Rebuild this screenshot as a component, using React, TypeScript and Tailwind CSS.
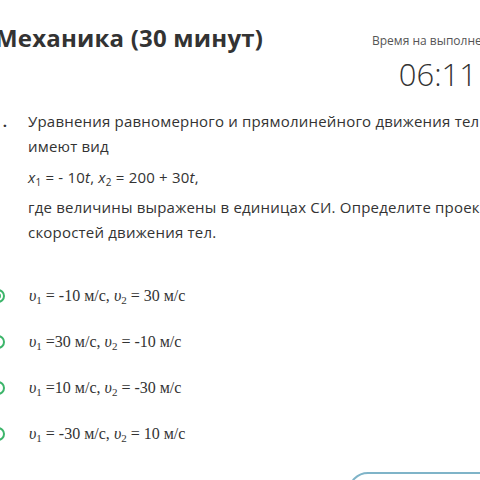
import React from "react"

const options = [
  { v1: "= -10 м/с,", v2: "= 30 м/с", checked: true },
  { v1: "=30 м/с,", v2: "= -10 м/с", checked: false },
  { v1: "=10 м/с,", v2: "= -30 м/с", checked: false },
  { v1: "= -30 м/с,", v2: "= 10 м/с", checked: false },
]

function Radio({ checked }: { checked: boolean }) {
  return (
    <span className="flex h-[14px] w-[14px] shrink-0 items-center justify-center rounded-full border-2 border-[#3cb56a]">
      {checked && <span className="h-[6px] w-[6px] rounded-full bg-[#3cb56a]" />}
    </span>
  )
}

export default function App() {
  return (
    <div
      className="relative h-[480px] w-[480px] overflow-hidden bg-white text-[#333]"
      style={{ fontFamily: '"Open Sans", "DejaVu Sans", sans-serif' }}
    >
      <div className="-ml-[5px] w-[560px]">
        {/* header */}
        <div className="flex items-start">
          <h1 className="mt-[23px] w-[377px] shrink-0 whitespace-nowrap text-[24px] font-bold leading-[30px] tracking-[0.2px] text-[#333]">
            Механика (30 минут)
          </h1>
          <div className="mt-[33px] flex flex-col items-center">
            <span className="whitespace-nowrap text-[12px] leading-[16px] text-[#555]">Время на выполнение</span>
            <span className="mt-[6px] text-[31px] font-light leading-[38px] text-[#333]">06:11</span>
          </div>
        </div>

        {/* question */}
        <div className="mt-[16px] flex">
          <div className="flex w-[12px] shrink-0 justify-end text-[15px] font-bold leading-[25px]">
            <span className="mr-[6px]">1</span>
            <span>.</span>
          </div>
          <div className="ml-[21px] text-[15px] leading-[25px] tracking-[0.2px]">
            <p className="whitespace-nowrap">Уравнения равномерного и прямолинейного движения тел</p>
            <p>имеют вид</p>
            <p className="mt-[6px]">
              <i>x</i>
              <sub className="text-[10px]">1</sub> = - 10<i>t</i>, <i>x</i>
              <sub className="text-[10px]">2</sub> = 200 + 30<i>t</i>,
            </p>
            <p className="mt-[5px] whitespace-nowrap">где величины выражены в единицах СИ. Определите проекции</p>
            <p>скоростей движения тел.</p>
          </div>
        </div>

        {/* options */}
        <div className="mt-[28px] -ml-[4px] flex flex-col">
          {options.map((o, i) => (
            <div key={i} className="flex h-[46px] items-center">
              <Radio checked={o.checked} />
              <span
                className="ml-[24px] whitespace-nowrap text-[16px] text-[#333]"
                style={{ fontFamily: '"Liberation Serif", serif' }}
              >
                <i>υ</i>
                <sub className="text-[11px]">1</sub> {o.v1} <i>υ</i>
                <sub className="text-[11px]">2</sub> {o.v2}
              </span>
            </div>
          ))}
        </div>

        {/* submit button edge */}
        <div className="ml-[353px] mt-[15px] h-[40px] w-[220px] rounded-[20px] border-2 border-[#7fb4c8]" />
      </div>
    </div>
  )
}
